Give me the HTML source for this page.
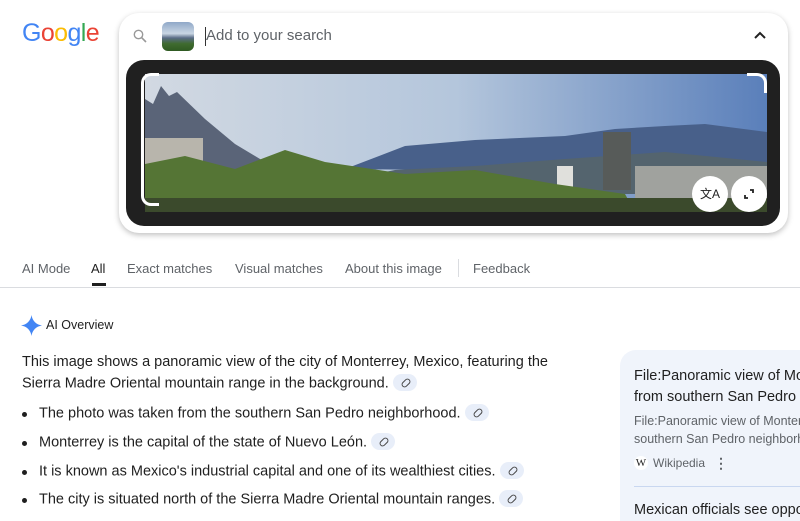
<!DOCTYPE html>
<html><head><meta charset="utf-8"><style>
*{margin:0;padding:0;box-sizing:border-box}
body{width:800px;height:521px;overflow:hidden;background:#fff;font-family:"Liberation Sans",Arial,sans-serif;position:relative;color:#1f1f1f}
.abs{position:absolute}
.logo{left:22px;top:19px;font-size:25px;letter-spacing:-0.6px;font-weight:normal}
.box{left:119px;top:13px;width:669px;height:220px;border-radius:20px;background:#fff;box-shadow:0 2px 6px rgba(0,0,0,.25)}
.frame{left:126px;top:60px;width:654px;height:166px;border-radius:18px;background:#202020;overflow:hidden}
.tab{top:261px;font-size:13px;color:#5f6368}
.line{font-size:14.5px;color:#1f1f1f;left:22px}
.bul{left:39px;font-size:14.5px}
.dot{position:absolute;left:-17px;top:7px;width:5px;height:5px;border-radius:50%;background:#1f1f1f}
.lk{display:inline-block;width:24px;height:17px;border-radius:9px;background:#e8eef9;vertical-align:middle;margin-left:4px;position:relative;top:-1px}
.lk:after{content:"";position:absolute;left:8px;top:6px;width:8px;height:4px;border:1.5px solid #444;border-radius:3px;transform:rotate(-45deg)}
.card{left:620px;top:350px;width:180px;height:171px;border-radius:16px 0 0 0;background:#f0f4fb;overflow:hidden}
</style></head><body>
<div class="abs logo"><span style="color:#4285f4">G</span><span style="color:#ea4335">o</span><span style="color:#fbbc05">o</span><span style="color:#4285f4">g</span><span style="color:#34a853">l</span><span style="color:#ea4335">e</span></div>
<div class="abs box"></div>
<svg class="abs" style="left:132px;top:28px" width="16" height="16" viewBox="0 0 16 16"><circle cx="6.5" cy="6.5" r="4.2" fill="none" stroke="#999" stroke-width="1.4"/><path d="M9.7 9.7L14 14" stroke="#999" stroke-width="1.6"/></svg>
<div class="abs" style="left:162px;top:22px;width:32px;height:29px;border-radius:6px;overflow:hidden;background:linear-gradient(#8fa8c8 0%,#c9d6e4 40%,#5a6c86 55%,#3f6b2f 75%,#2f5a22 100%)"></div>
<div class="abs" style="left:205px;top:27px;width:1px;height:19px;background:#333"></div>
<div class="abs" style="left:206px;top:27px;font-size:15px;color:#5f6368">Add to your search</div>
<svg class="abs" style="left:753px;top:29px" width="14" height="12" viewBox="0 0 14 12"><path d="M2 9L7 4L12 9" fill="none" stroke="#222" stroke-width="2"/></svg>
<div class="abs frame">
<svg class="abs" style="left:19px;top:14px" width="622" height="138" viewBox="0 0 622 138">
<defs><linearGradient id="sky" x1="0" x2="1" y1="0" y2="0"><stop offset="0" stop-color="#d2d9e2"/><stop offset=".5" stop-color="#b4c6dc"/><stop offset="1" stop-color="#5a7fba"/></linearGradient></defs>
<rect width="622" height="138" fill="url(#sky)"/>
<path d="M0 95 L0 25 L8 30 L16 12 L24 22 L32 18 L60 45 L90 70 L120 88 L140 95Z" fill="#5a6478"/>
<path d="M200 95 L260 72 L330 66 L420 62 L470 55 L520 52 L560 50 L622 58 L622 100Z" fill="#48608a"/>
<path d="M180 110 L250 96 L330 92 L420 85 L520 78 L622 88 L622 120 L180 120Z" fill="#54646e"/>
<rect x="0" y="64" width="58" height="28" fill="#b8b5ac"/>
<rect x="458" y="58" width="28" height="58" fill="#575b59"/>
<rect x="412" y="92" width="16" height="40" fill="#e0e0dc"/>
<rect x="490" y="92" width="132" height="46" fill="#a0a29e"/>
<path d="M0 138 L0 90 L40 82 L90 95 L140 76 L180 88 L260 100 L330 96 L410 110 L480 120 L490 138Z" fill="#557535"/>
<rect x="0" y="124" width="622" height="14" fill="#3b4a2c"/>
</svg>
<div class="abs" style="left:15px;top:13px;width:18px;height:133px;border:3px solid #fff;border-right:none;border-radius:10px 0 0 10px"></div>
<div class="abs" style="left:621px;top:13px;width:20px;height:20px;border:3px solid #fff;border-left:none;border-bottom:none;border-radius:0 10px 0 0"></div>
<div class="abs" style="left:566px;top:116px;width:36px;height:36px;border-radius:50%;background:#fff;font-size:12px;text-align:center;line-height:36px;color:#222">文A</div>
<div class="abs" style="left:605px;top:116px;width:36px;height:36px;border-radius:50%;background:#fff"><svg width="36" height="36"><path d="M14 19v3h3M22 17v-3h-3" fill="none" stroke="#222" stroke-width="1.8"/></svg></div>
</div>
<div class="abs tab" style="left:22px">AI Mode</div>
<div class="abs tab" style="left:91px;color:#1f1f1f">All</div>
<div class="abs" style="left:92px;top:283px;width:14px;height:3px;background:#1f1f1f"></div>
<div class="abs tab" style="left:127px">Exact matches</div>
<div class="abs tab" style="left:235px">Visual matches</div>
<div class="abs tab" style="left:345px">About this image</div>
<div class="abs" style="left:458px;top:259px;width:1px;height:18px;background:#dadce0"></div>
<div class="abs tab" style="left:473px">Feedback</div>
<div class="abs" style="left:0;top:287px;width:800px;height:1px;background:#dadce0"></div>
<svg class="abs" style="left:21px;top:315px" width="21" height="21" viewBox="0 0 20 20"><path d="M10 0C10.8 5.5 14.5 9.2 20 10C14.5 10.8 10.8 14.5 10 20C9.2 14.5 5.5 10.8 0 10C5.5 9.2 9.2 5.5 10 0Z" fill="#4285f4"/></svg>
<div class="abs" style="left:46px;top:318px;font-size:12.5px;color:#1f1f1f">AI Overview</div>
<div class="abs line" style="top:354px">This image shows a panoramic view of the city of Monterrey, Mexico, featuring the</div>
<div class="abs line" style="top:375px">Sierra Madre Oriental mountain range in the background.<span class="lk"></span></div>
<div class="abs bul" style="top:405px"><i class="dot"></i>The photo was taken from the southern San Pedro neighborhood.<span class="lk"></span></div>
<div class="abs bul" style="top:434px"><i class="dot"></i>Monterrey is the capital of the state of Nuevo León.<span class="lk"></span></div>
<div class="abs bul" style="top:463px"><i class="dot"></i>It is known as Mexico's industrial capital and one of its wealthiest cities.<span class="lk"></span></div>
<div class="abs bul" style="top:491px"><i class="dot"></i>The city is situated north of the Sierra Madre Oriental mountain ranges.<span class="lk"></span></div>
<div class="abs card">
<div class="abs" style="left:14px;top:16px;font-size:14.5px;line-height:21px;white-space:nowrap">File:Panoramic view of Monterrey<br>from southern San Pedro neighborhood</div>
<div class="abs" style="left:14px;top:62px;font-size:12.5px;line-height:18px;color:#5f6368;white-space:nowrap">File:Panoramic view of Monterrey from<br>southern San Pedro neighborhood</div>
<div class="abs" style="left:14px;top:106px;width:14px;height:14px;border-radius:50%;background:#fff;font-family:'Liberation Serif',serif;font-size:11px;text-align:center;line-height:14px">W</div>
<div class="abs" style="left:33px;top:106px;font-size:12px;color:#5f6368">Wikipedia</div>
<div class="abs" style="left:94px;top:105px;font-size:14px;color:#5f6368;font-weight:bold">⋮</div>
<div class="abs" style="left:14px;top:136px;width:170px;height:1px;background:#c9d7f0"></div>
<div class="abs" style="left:14px;top:152px;font-size:14.5px;white-space:nowrap">Mexican officials see opportunity</div>
</div>
</body></html>
